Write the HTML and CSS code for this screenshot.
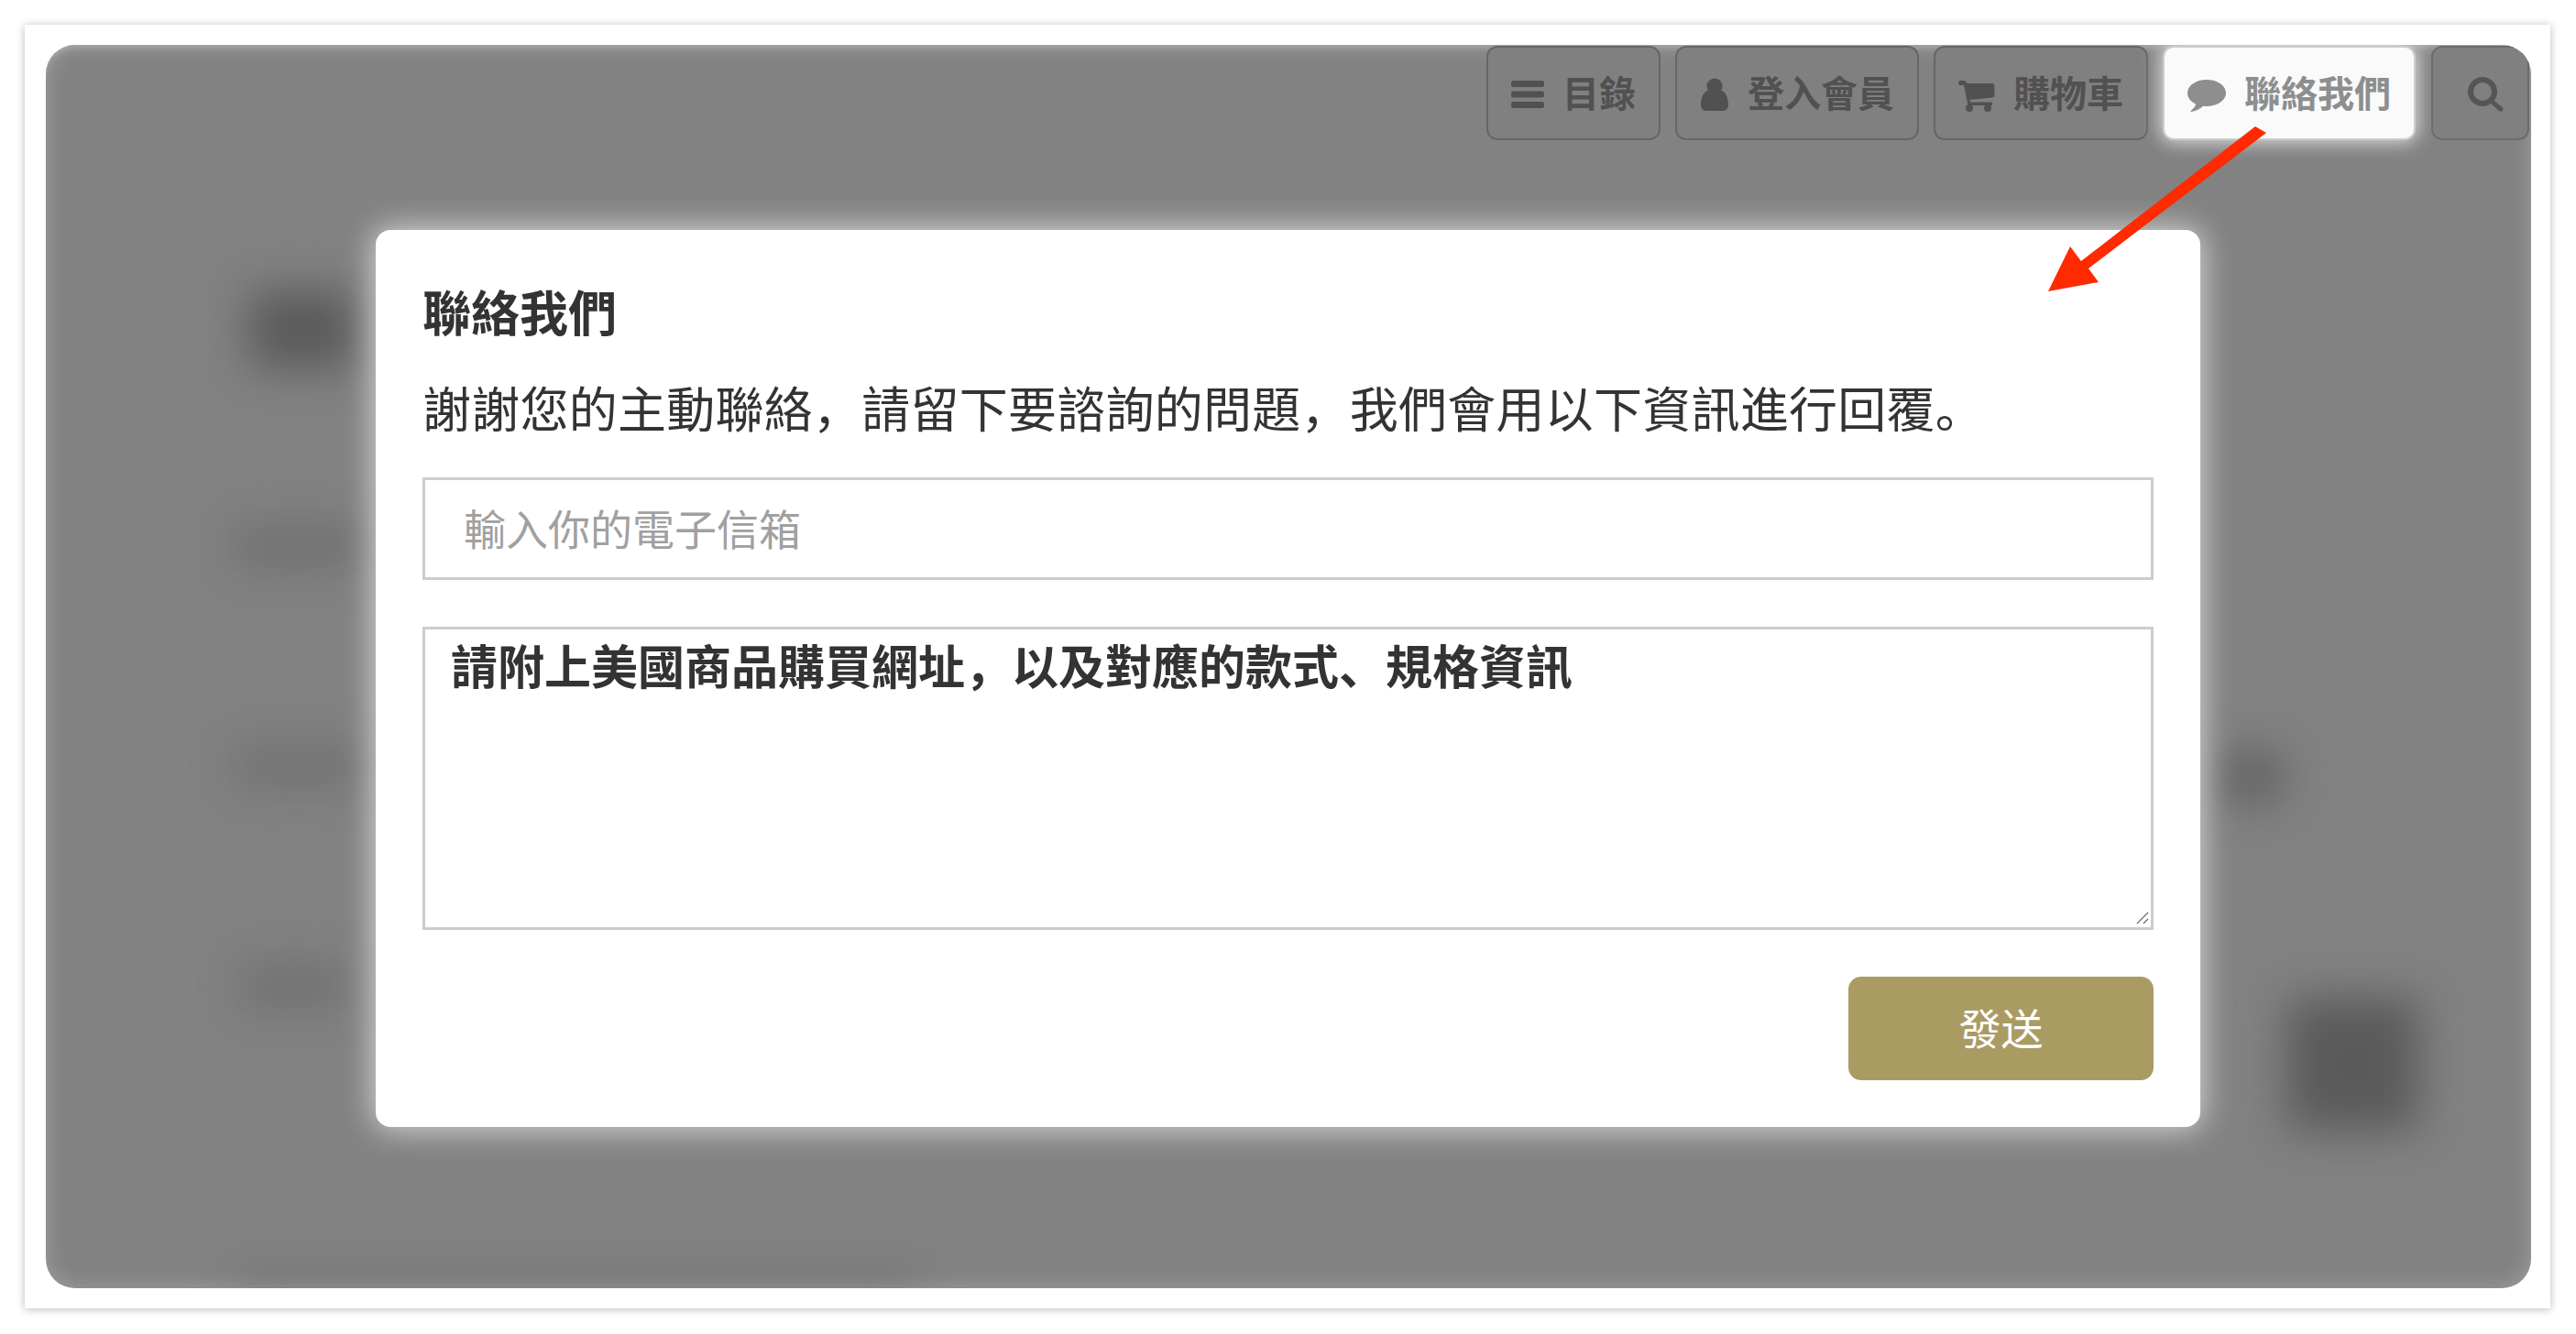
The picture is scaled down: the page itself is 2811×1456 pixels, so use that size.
FILE: index.html
```html
<!DOCTYPE html>
<html lang="zh">
<head>
<meta charset="utf-8">
<title>聯絡我們</title>
<link rel="stylesheet" href="styles.css">
</head>
<body>
<main class="frame">
  <section class="panel">
    <div class="blurred" aria-hidden="true">
      <i class="blob b1"></i><i class="blob b2"></i><i class="blob b3"></i><i class="blob b4"></i>
      <i class="blob b5"></i><i class="blob b6"></i><i class="blob b7"></i>
    </div>
    <nav class="nav">
      <a class="nav-btn">
        <svg class="ico ico-bars" viewBox="0 0 36 30"><rect width="36" height="7" y="0" rx="2.5"/><rect width="36" height="7" y="11.5" rx="2.5"/><rect width="36" height="7" y="23" rx="2.5"/></svg>
        <span>目錄</span>
      </a>
      <a class="nav-btn">
        <svg class="ico ico-user" viewBox="0 0 32 36"><circle cx="16" cy="9" r="8.6"/><path d="M1 29.5C1 20 5 14.5 9.500 13.500C11 16 13.500 17 16 17C18.500 17 21 16 22.500 13.500C27 14.500 31 20 31 29.500C31 33.500 28.500 36 25 36H7C3.500 36 1 33.500 1 29.500Z"/></svg>
        <span>登入會員</span>
      </a>
      <a class="nav-btn">
        <svg class="ico ico-cart" viewBox="0 0 40 34"><path d="M0 2.500C0 1 1 0 2.500 0H6C7.500 0 8.500.8 9 2L9.500 3H37C38.500 3 39.500 4 39.500 5.500V16C39.500 17.500 38.500 18.300 37 18.500L12.500 21L13 23.500H37V27H10.500L6 5H2.500C1 5 0 4 0 2.500Z"/><circle cx="12" cy="30" r="4"/><circle cx="32" cy="30" r="4"/></svg>
        <span>購物車</span>
      </a>
      <a class="nav-btn is-active">
        <svg class="ico ico-comment" viewBox="0 0 42 35"><path d="M21 0C32.600 0 42 6.300 42 14.500C42 22.500 32.600 29 21 29C19.700 29 18.400 28.900 17.100 28.800C13.500 31.900 9.500 34.200 4.500 35C3.600 35.100 3.400 34.300 4 33.800C6.500 31.500 8.500 29.300 9.200 26.600C3.600 24 0 19.500 0 14.500C0 6.300 9.400 0 21 0Z"/></svg>
        <span>聯絡我們</span>
      </a>
      <a class="nav-btn nav-search">
        <svg class="ico ico-search" viewBox="0 0 39 38"><path d="M16 0A16 16 0 1 1 16 32A16 16 0 1 1 16 0ZM16 6A10 10 0 1 0 16 26A10 10 0 1 0 16 6Z" fill-rule="evenodd"/><path d="M26 23.500L38 33.500A3 3 0 0 1 38 36.500A3 3 0 0 1 34 37L23 27Z"/></svg>
      </a>
    </nav>
    <div class="overlay">
      <form class="modal">
        <h2 class="modal-title">聯絡我們</h2>
        <p class="modal-desc">謝謝您的主動聯絡&#65292;請留下要諮詢的問題&#65292;我們會用以下資訊進行回覆。</p>
        <input class="field field-email" type="text" placeholder="輸入你的電子信箱">
        <div class="msg-wrap">
          <textarea class="field field-msg">請附上美國商品購買網址&#65292;以及對應的款式、規格資訊</textarea>
          <svg class="grip" viewBox="0 0 16 16" aria-hidden="true"><path d="M1 15L15 1M9 15L15 9" stroke="#555" stroke-width="1.300" fill="none"/></svg>
        </div>
        <div class="actions"><button class="send" type="button">發送</button></div>
      </form>
    </div>
  </section>
  <svg class="arrow" viewBox="0 0 250 190" aria-hidden="true">
    <path d="M226 3L238 10L44 158L55 173L0 183L24 134L36 150Z" fill="#ff2a00"/>
  </svg>
</main>
</body>
</html>
```
FILE: styles.css
```css
* { box-sizing: border-box; }
html, body { margin: 0; background: #fff; }
body {
  width: 2811px;
  height: 1456px;
  padding: 27px 28px 28px 27px;
  font-family: "Noto Sans CJK SC", "Noto Sans", sans-serif;
  color: #333;
}
.frame {
  position: relative;
  height: 100%;
  padding: 22px 21px 22px 23px;
  background: #fff;
  box-shadow: 0 1px 9px rgba(0, 0, 0, .28);
}
.panel {
  position: relative;
  height: 100%;
  overflow: hidden;
  border-radius: 32px;
  background: #828282;
}
.panel::after {
  content: "";
  position: absolute;
  inset: 0;
  border-radius: 32px;
  box-shadow: inset 0 0 24px rgba(255, 255, 255, .24), inset 0 7px 9px -5px rgba(190, 190, 215, .55);
  pointer-events: none;
}
.blurred { position: absolute; inset: 0; }
.blob { position: absolute; display: block; filter: blur(24px); }
.b1 { left: 222px; top: 268px; width: 115px; height: 85px; background: #5a5a5a; }
.b2 { left: 205px; top: 522px; width: 140px; height: 50px; background: #707070; }
.b3 { left: 205px; top: 762px; width: 140px; height: 50px; background: #727272; }
.b4 { left: 212px; top: 1002px; width: 115px; height: 50px; background: #707070; }
.b5 { left: 2375px; top: 772px; width: 65px; height: 55px; background: #606060; }
.b6 { left: 2445px; top: 1040px; width: 145px; height: 145px; background: #5a5a5a; }
.b7 { left: 210px; top: 1350px; width: 740px; height: 30px; background: #6c6c6c; }

.nav {
  position: relative;
  z-index: 1;
  display: flex;
  justify-content: flex-end;
  gap: 16px;
  padding: 1px 2px 0 0;
}
.nav-btn {
  display: flex;
  align-items: center;
  gap: 20px;
  height: 103px;
  padding: 0 25px 4px;
  border: 2px solid #666;
  border-radius: 12px;
  background: #808080;
  color: #515151;
  font-size: 40px;
  font-weight: 700;
  line-height: 1;
}
.ico { display: block; fill: currentColor; flex: none; margin-top: 6px; }
.ico-bars { width: 36px; height: 30px; }
.ico-user { width: 32px; height: 36px; }
.ico-cart { width: 40px; height: 34px; margin-top: 10px; }
.ico-comment { width: 42px; height: 35px; margin-top: 10px; }
.ico-search { width: 39px; height: 38px; }
.is-active {
  border-color: #ccc;
  background: #fafafa;
  color: #8e8e8e;
  box-shadow: 0 0 20px 2px rgba(255, 255, 255, .75);
}
.nav-search { margin-left: 1px; padding: 0 26px 4px 38px; border-color: #6c6c6c; color: #555; }

.overlay {
  position: absolute;
  inset: 0;
  z-index: 2;
  display: flex;
  padding: 202px 0 0 360px;
}
.modal {
  width: 1991px;
  height: 979px;
  padding: 52px 51px 50px 51px;
  border-radius: 16px;
  background: #fff;
  box-shadow: 0 0 34px 2px rgba(255, 255, 255, .7);
  display: flex;
  flex-direction: column;
}
.modal-title {
  margin: 0;
  font-size: 53px;
  font-weight: 700;
  line-height: 72px;
  color: #333;
}
.modal-desc {
  margin: 33px 0 0;
  font-size: 53px;
  font-weight: 400;
  line-height: 72px;
  letter-spacing: .25px;
  white-space: nowrap;
}
.field {
  display: block;
  width: 100%;
  margin: 0;
  border: 3px solid #ccc;
  border-radius: 0;
  background: #fff;
  outline: none;
  font-family: inherit;
  color: #333;
}
.field-email {
  height: 112px;
  margin-top: 41px;
  padding: 0 42px 4px;
  font-size: 46px;
}
.field-email::placeholder { color: #a0a0a0; opacity: 1; }
.msg-wrap { position: relative; margin-top: 51px; }
.field-msg {
  height: 331px;
  padding: 6px 28px;
  font-size: 51px;
  font-weight: 700;
  line-height: 64px;
  resize: none;
}
.grip { position: absolute; right: 5px; bottom: 6px; width: 14px; height: 14px; }
.actions { display: flex; justify-content: flex-end; margin-top: 51px; }
.send {
  width: 333px;
  height: 113px;
  padding: 0 0 5px;
  border: 0;
  border-radius: 14px;
  background: #aa9b63;
  color: #fff;
  font-family: inherit;
  font-size: 46px;
  font-weight: 400;
}
.arrow {
  position: absolute;
  left: 2208px;
  top: 108px;
  width: 250px;
  height: 190px;
  z-index: 3;
  overflow: visible;
}
```
